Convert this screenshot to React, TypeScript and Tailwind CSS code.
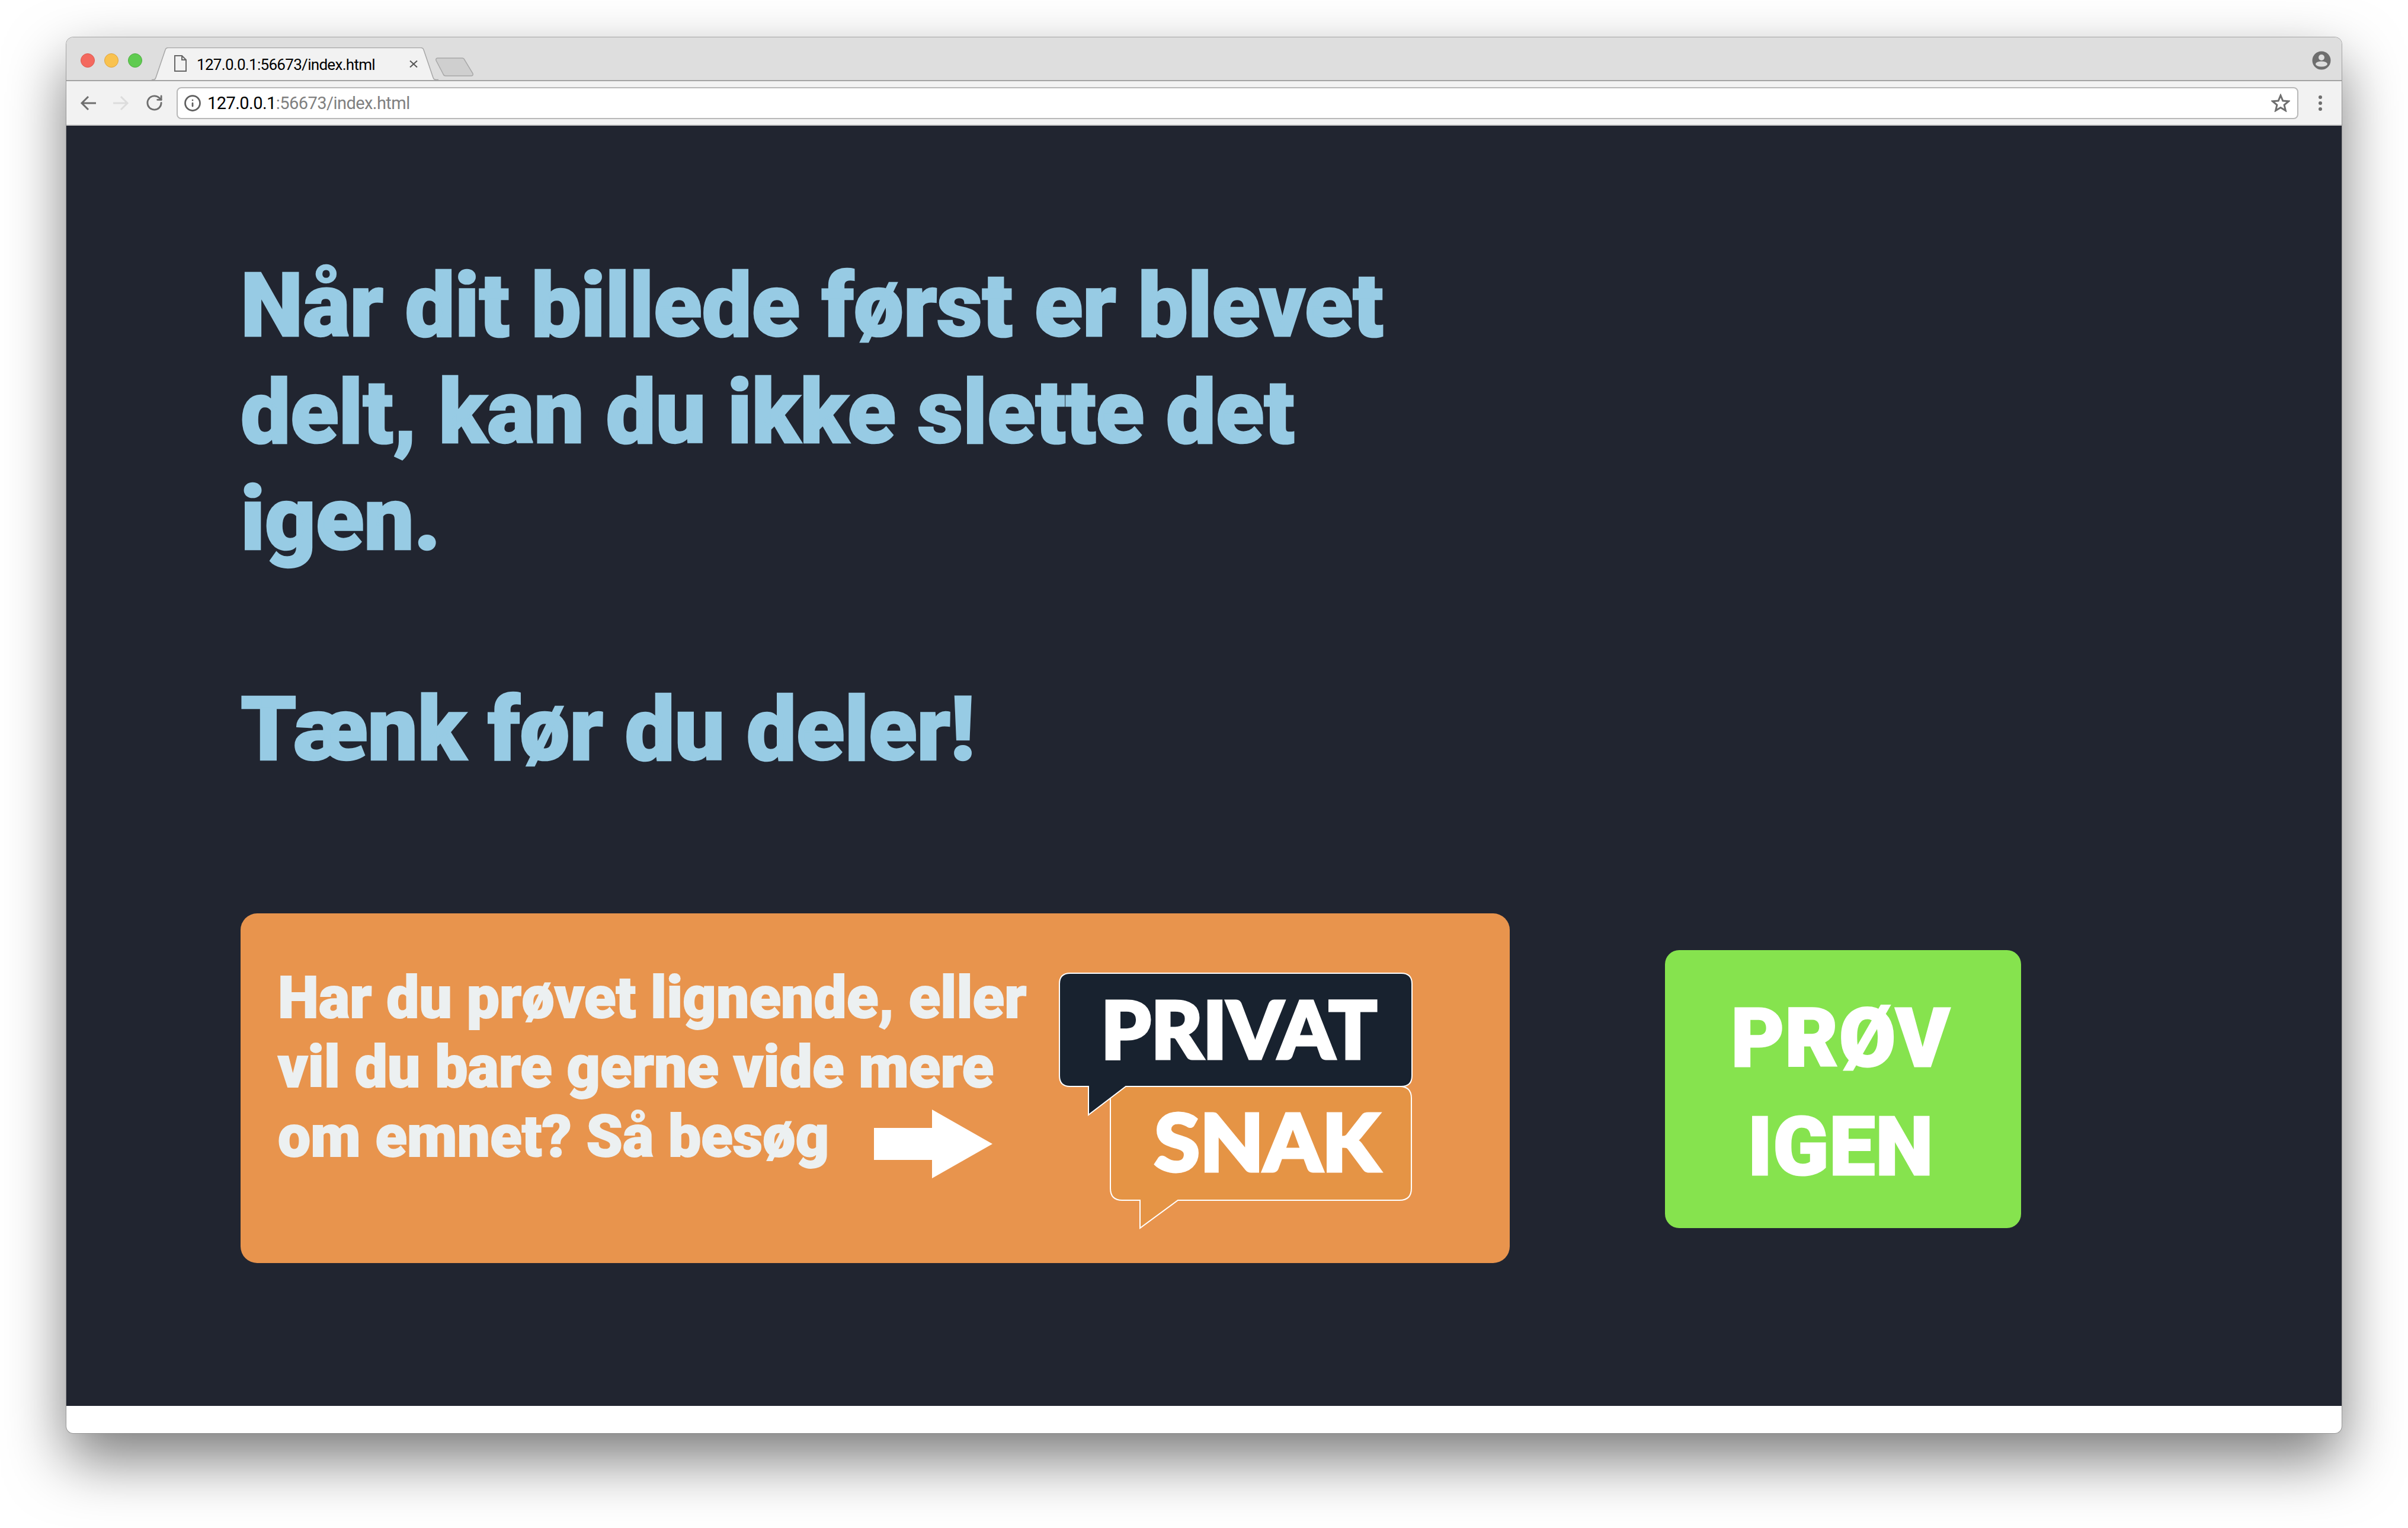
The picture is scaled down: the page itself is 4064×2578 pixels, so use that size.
import { Info, RotateCw } from 'lucide-react';

const roboto = { fontFamily: 'Roboto, sans-serif' };

function TrafficLights() {
  return (
    <div className="flex gap-4 self-start mt-[27px]">
      <div className="w-6 h-[24px] rounded-full bg-[#f4695f] border border-[#dc5a50]" />
      <div className="w-6 h-[24px] rounded-full bg-[#f9c24f] border border-[#dfa53e]" />
      <div className="w-6 h-[24px] rounded-full bg-[#5fcb50] border border-[#50ae42]" />
    </div>
  );
}

function Tab() {
  return (
    <div className="relative w-[484px] h-[55px] ml-4 shrink-0">
      <svg className="absolute inset-0" width="484" height="55" viewBox="0 0 484 55">
        <path
          d="M0 54.5 H3 Q6 54.5 7 51 L23 4 Q24 0.5 28 0.5 H454 Q458 0.5 459 4 L475 51 Q476 54.5 480 54.5 H484 V55 H0 Z"
          fill="#f2f2f2"
        />
        <path
          d="M0 54.5 H3 Q6 54.5 7 51 L23 4 Q24 0.5 28 0.5 H454 Q458 0.5 459 4 L475 51 Q476 54.5 480 54.5 H484"
          fill="none"
          stroke="#a6a6a6"
          strokeWidth="1.5"
        />
      </svg>
      <div className="relative flex items-center h-full pl-[38px]">
        <svg width="21" height="28" viewBox="0 0 21 28" className="mb-[1px]">
          <path d="M1 1 H13 L20 8 V27 H1 Z M13 1 V8 H20" fill="none" stroke="#666666" strokeWidth="2" />
        </svg>
        <span className="ml-[17px] w-[359px] text-[26px] leading-none tracking-[-0.7px] text-black mt-[3px]" style={roboto}>
          127.0.0.1:56673/index.html
        </span>
        <svg width="14" height="12" viewBox="0 0 14 12" className="mt-[1px]">
          <path d="M1 0.5 L13 11.5 M13 0.5 L1 11.5" stroke="#555555" strokeWidth="2" />
        </svg>
      </div>
    </div>
  );
}

function Logo() {
  return (
    <svg width="604" height="436" viewBox="1784 1640 604 436" className="shrink-0">
      <path
        d="M1874 1850 V2005 Q1874 2025 1894 2025 H1924 V2072 L1988 2025 H2362 Q2382 2025 2382 2005 V1853 Q2382 1833 2362 1833 H1874 Z"
        fill="#e59445"
        stroke="#ffffff"
        strokeWidth="2"
      />
      <path
        d="M1806 1642 H2365 Q2383 1642 2383 1660 V1815 Q2383 1833 2365 1833 H1900 L1837 1881 V1833 H1806 Q1788 1833 1788 1815 V1660 Q1788 1642 1806 1642 Z"
        fill="#18222f"
        stroke="#ffffff"
        strokeWidth="2"
      />
      <text x="1858" y="1786" fill="#ffffff" stroke="#ffffff" strokeWidth="5" fontSize="134" fontWeight="900" style={{ fontFamily: 'Lato, sans-serif' }} textLength="466" lengthAdjust="spacingAndGlyphs">
        PRIVAT
      </text>
      <text x="1948" y="1976" fill="#ffffff" stroke="#ffffff" strokeWidth="5" fontSize="134" fontWeight="900" style={{ fontFamily: 'Lato, sans-serif' }} textLength="380" lengthAdjust="spacingAndGlyphs">
        SNAK
      </text>
    </svg>
  );
}

export default function App() {
  return (
    <div className="w-[4064px] h-[2578px] overflow-hidden bg-white pt-[63px] pl-[112px]">
      <div className="w-[3840px] h-[2355px] rounded-[12px] overflow-hidden flex flex-col bg-white shadow-[0_0_0_1px_rgba(120,120,120,0.6),0_44px_100px_rgba(0,0,0,0.52)]">
        {/* Title bar */}
        <div className="flex items-end h-[74px] shrink-0 bg-[#dedede] border-b-[2px] border-[#a3a3a3] pl-6 pr-[18px]">
          <TrafficLights />
          <Tab />
          <svg width="66" height="32" viewBox="0 0 66 32" className="self-start mt-[34px] -ml-[6px]">
            <path d="M5 1 H46 Q49 1 50 4 L64 27 Q65 31 61 31 H18 Q15 31 14 28 L2 5 Q1 1 5 1 Z" fill="#cfcfcf" stroke="#a8a8a8" strokeWidth="1.5" />
          </svg>
          <div className="flex-1" />
          <svg width="32" height="32" viewBox="0 0 32 32" className="self-start mt-[23px]">
            <circle cx="16" cy="16" r="15.5" fill="#6e6e6e" />
            <circle cx="16" cy="11" r="5" fill="#dedede" />
            <ellipse cx="16" cy="22" rx="10" ry="4.5" fill="#dedede" />
          </svg>
        </div>

        {/* Toolbar */}
        <div className="flex items-center h-[75px] shrink-0 bg-[#f2f2f2] border-b-[2px] border-[#d0d0d0] pl-[23px] pr-[33px]">
          <svg width="27" height="26" viewBox="0 0 27 26" fill="none" stroke="#6e6e6e" strokeWidth="3">
            <path d="M27 13 H3 M14 2 L3 13 L14 24" />
          </svg>
          <svg width="27" height="26" viewBox="0 0 27 26" fill="none" stroke="#dcdcdc" strokeWidth="3" className="ml-[29px]">
            <path d="M0 13 H24 M13 2 L24 13 L13 24" />
          </svg>
          <RotateCw className="ml-[27px] text-[#6e6e6e]" size={31} strokeWidth={2.2} />
          <div className="flex items-center ml-[22px] flex-1 h-[54px] bg-white border-2 border-[#b8b8b8] rounded-[8px] pl-[10px] pr-[12px]">
            <Info className="text-[#5f5f5f]" size={30} strokeWidth={2.2} />
            <span className="ml-[10px] mt-[2px] text-[29px] leading-none tracking-[-0.55px] text-[#808080]" style={roboto}>
              <span className="text-black">127.0.0.1</span>:56673/index.html
            </span>
            <div className="flex-1" />
            <svg width="32" height="31" viewBox="0 0 32 31" fill="none" stroke="#6e6e6e" strokeWidth="3">
              <path d="M16 3 L19.8 12 L29.5 12.8 L22.1 19.1 L24.4 28.6 L16 23.5 L7.6 28.6 L9.9 19.1 L2.5 12.8 L12.2 12 Z" />
            </svg>
          </div>
          <div className="flex flex-col gap-[4px] ml-[34px]">
            <div className="w-[6px] h-[6px] rounded-full bg-[#6e6e6e]" />
            <div className="w-[6px] h-[6px] rounded-full bg-[#6e6e6e]" />
            <div className="w-[6px] h-[6px] rounded-full bg-[#6e6e6e]" />
          </div>
        </div>

        {/* Page */}
        <div className="h-[2160px] shrink-0 bg-[#212530] pl-[294px] pt-[214px]" style={roboto}>
          <h1 className="text-[150px] leading-[180px] font-black tracking-[-0.4px] text-[#97cbe4] [-webkit-text-stroke:2.5px_#97cbe4]">
            Når dit billede først er blevet
            <br />
            delt, kan du ikke slette det
            <br />
            igen.
          </h1>
          <h1 className="mt-[175px] text-[150px] leading-[180px] font-black tracking-[-0.4px] text-[#97cbe4] [-webkit-text-stroke:2.5px_#97cbe4]">
            Tænk før du deler!
          </h1>

          <div className="flex items-center mt-[220px]">
            <div className="flex w-[2142px] h-[590px] rounded-[28px] bg-[#e8944d] pl-[63px] pt-[84px]">
              <div className="w-[1319px] shrink-0 text-[98px] leading-[117px] font-black tracking-[0.2px] text-[#ecf0f1] [-webkit-text-stroke:2px_#ecf0f1]">
                <div>Har du prøvet lignende, eller</div>
                <div>vil du bare gerne vide mere</div>
                <div className="flex items-center h-[117px]">
                  om emnet? Så besøg
                  <svg width="200" height="116" viewBox="0 0 200 116" className="ml-[76px] mt-[24px] shrink-0">
                    <path d="M0 31 H98 V0 L200 58 L98 116 V85 H0 Z" fill="#ffffff" stroke="none" />
                  </svg>
                </div>
              </div>
              <div className="-ml-1 mt-[15px]">
                <Logo />
              </div>
            </div>

            <div className="ml-[262px] mt-[3px] flex items-center justify-center w-[601px] h-[469px] rounded-[24px] bg-[#86e34e] text-[138px] leading-[183px] font-black tracking-[1px] text-white text-center [-webkit-text-stroke:3px_#ffffff]">
              <div className="pt-[12px] pr-[8px]">
                PRØV
                <br />
                IGEN
              </div>
            </div>
          </div>
        </div>
      </div>
    </div>
  );
}
